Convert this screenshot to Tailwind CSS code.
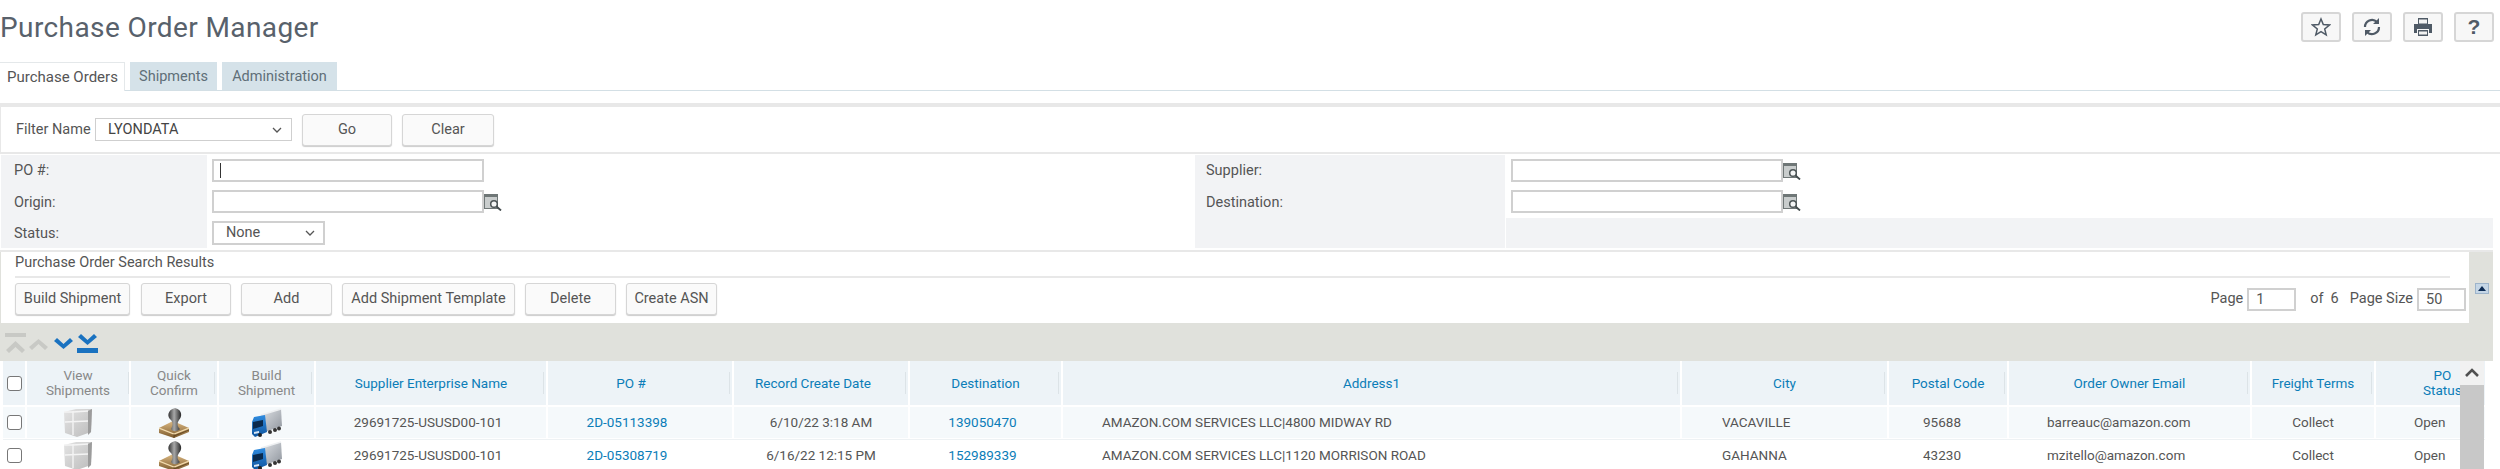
<!DOCTYPE html>
<html lang="en">
<head>
  <meta charset="UTF-8">
  <title>Purchase Order Manager</title>
  <script src="https://cdn.jsdelivr.net/npm/@tailwindcss/browser@4"></script>
</head>
<body class="w-[2500px] h-[469px] overflow-hidden bg-white font-['Roboto',sans-serif] text-[14.5px] text-[#555]">
  <svg class="absolute w-0 h-0">
    <defs>
      <linearGradient id="cubeG" x1="0" y1="0" x2="1" y2="1"><stop offset="0" stop-color="#e4e4e4"/><stop offset="1" stop-color="#bcbcbc"/></linearGradient>
      <linearGradient id="woodG" x1="0" y1="0" x2="0" y2="1"><stop offset="0" stop-color="#dcb983"/><stop offset="1" stop-color="#7c5a2c"/></linearGradient>
      <linearGradient id="knobG" x1="0" y1="0" x2="1" y2="0"><stop offset="0" stop-color="#333"/><stop offset="0.45" stop-color="#a8a8a8"/><stop offset="1" stop-color="#262626"/></linearGradient>
      <linearGradient id="trailerG" x1="0" y1="0" x2="1" y2="1"><stop offset="0" stop-color="#dfe2e6"/><stop offset="1" stop-color="#8f959d"/></linearGradient>
      <linearGradient id="cabG" x1="0" y1="0" x2="0" y2="1"><stop offset="0" stop-color="#2f8ce0"/><stop offset="1" stop-color="#0f559f"/></linearGradient>
    </defs>
    <symbol id="cube" viewBox="0 0 30 30">
      <path d="M1 4 L13 1 L29 1 L28 24 L14 29 L2 25 Z" fill="url(#cubeG)"/>
      <path d="M25 3 L29 1 L28 24 L25 27 Z" fill="#9c9c9c"/>
      <path d="M10 3 V27 M2 14 L25 13 M1 4 L10 4 L25 3" stroke="#f4f4f4" stroke-width="1.4" fill="none"/>
    </symbol>
    <symbol id="stamp" viewBox="0 0 30 30">
      <path d="M0 20 L14 13 L30 20 L30 24 L15 30 L0 25 Z" fill="url(#woodG)"/>
      <path d="M0 20 L15 26 L30 20" stroke="#f3dcae" stroke-width="1.2" fill="none"/>
      <path d="M15 26 V30 M15 28 L30 22" stroke="#5a3f1c" stroke-width="0.8" fill="none"/>
      <path d="M12 21 C14 17 14 15 12 12 C8 9 8 2 16 0 C24 2 23 9 20 12 C18 15 18 18 21 21 C18 24 14 24 12 21 Z" fill="url(#knobG)"/>
    </symbol>
    <symbol id="truck" viewBox="0 0 30 30">
      <path d="M9 7 L29 1 L30 18 L13 24 Z" fill="url(#trailerG)"/>
      <path d="M9 7 L29 1" stroke="#eef0f2" stroke-width="1.4"/>
      <path d="M0 14 L2 9 L13 7 L15 24 L3 29 L0 26 Z" fill="url(#cabG)"/>
      <path d="M1 14 L11 12 L11 18 L1 21 Z" fill="#0a2a4d"/>
      <path d="M2 24 L7 23 L7 25 L2 26 Z" fill="#d8e6f4"/>
      <circle cx="8" cy="27" r="2" fill="#222"/><circle cx="18" cy="24" r="2" fill="#333"/><circle cx="23" cy="22" r="2" fill="#333"/><circle cx="27" cy="20.5" r="2" fill="#333"/>
    </symbol>
    <symbol id="lookup" viewBox="0 0 18 17">
      <rect x="0.5" y="0.5" width="13" height="14" fill="#c9cdcd" stroke="#6f7777"/>
      <rect x="0" y="0" width="14" height="3" fill="#6f7777"/>
      <circle cx="10" cy="10" r="3.3" fill="#f4f5f5" stroke="#4d5557" stroke-width="1.5"/>
      <path d="M12.5 12.5 L17 16.5" stroke="#444c4e" stroke-width="1.8"/>
    </symbol>
    <symbol id="chev" viewBox="0 0 10 6"><path d="M1 1 L5 5 L9 1" fill="none" stroke="#555" stroke-width="1.3"/></symbol>
  </svg>

  <!-- title and page tools -->
  <header class="h-[62px] flex items-start justify-between">
    <h1 class="mt-[8px] text-[28px] leading-[40px] tracking-[0.4px] text-[#58616b]">Purchase Order Manager</h1>
    <div class="mt-[12px] mr-[6px] flex gap-[11px]">
      <button class="w-[40px] h-[30px] flex items-center justify-center border-2 border-[#d6d6d6] rounded-[3px] bg-[#f7f7f7]">
        <svg width="20" height="20" viewBox="0 0 20 20"><path d="M10 2 L12.3 7.6 L18.4 8 L13.7 11.9 L15.2 17.8 L10 14.6 L4.8 17.8 L6.3 11.9 L1.6 8 L7.7 7.6 Z" fill="none" stroke="#4f5a66" stroke-width="1.5"/></svg>
      </button>
      <button class="w-[40px] h-[30px] flex items-center justify-center border-2 border-[#d6d6d6] rounded-[3px] bg-[#f7f7f7]">
        <svg width="20" height="20" viewBox="0 0 20 20"><path d="M3 10 A7 7 0 0 1 15 5 M17 10 A7 7 0 0 1 5 15" fill="none" stroke="#4f5a66" stroke-width="2.2"/><path d="M17 1 V7 H11 Z M3 19 V13 H9 Z" fill="#4f5a66"/></svg>
      </button>
      <button class="w-[40px] h-[30px] flex items-center justify-center border-2 border-[#d6d6d6] rounded-[3px] bg-[#f7f7f7]">
        <svg width="20" height="20" viewBox="0 0 20 20"><path d="M5 1 H15 V7 H5 Z M1 7 H19 V16 H16 V12 H4 V16 H1 Z M5 13 H15 V19 H5 Z" fill="#4f5a66"/><path d="M6 2.5 H14 V6.5 H6 Z M6 14.5 H14 V17.5 H6 Z" fill="#f2f2f2"/></svg>
      </button>
      <button class="w-[40px] h-[30px] flex items-center justify-center border-2 border-[#d6d6d6] rounded-[3px] bg-[#f7f7f7] font-['Liberation_Sans',sans-serif] font-bold text-[21px] text-[#4f5a66]">?</button>
    </div>
  </header>

  <!-- tabs -->
  <nav class="h-[29px] flex items-stretch gap-[5px] border-b border-[#d3dfe5]">
    <span class="w-[125px] -mb-px pl-[7px] text-[15px] leading-[29px] bg-white border-t border-r border-[#e4e8ea]">Purchase Orders</span>
    <span class="w-[87px] text-center leading-[29px] bg-[#d5e2e9] text-[#5f6f78]">Shipments</span>
    <span class="w-[115px] text-center leading-[29px] bg-[#d5e2e9] text-[#5f6f78]">Administration</span>
  </nav>
  <div class="mt-[12px] h-[4px] bg-[#e8e8e8]"></div>

  <!-- saved filter -->
  <section class="h-[47px] pl-[15px] flex items-center border-b-2 border-[#e8e8e8] border-l border-l-[#e8e8e8]">
    <span class="w-[79px]">Filter Name</span>
    <div class="w-[197px] h-[23px] pl-[12px] pr-[9px] flex items-center justify-between border border-[#cfcfcf]">
      <span class="text-[#444]">LYONDATA</span>
      <svg width="10" height="6"><use href="#chev"/></svg>
    </div>
    <button class="ml-[10px] w-[90px] h-[32px] border border-[#d6d6d6] rounded-[3px] bg-[#fafafa] shadow-[0_1px_1px_#ccc] text-[#555]">Go</button>
    <button class="ml-[10px] w-[92px] h-[32px] border border-[#d6d6d6] rounded-[3px] bg-[#fafafa] shadow-[0_1px_1px_#ccc] text-[#555]">Clear</button>
  </section>

  <!-- search fields -->
  <section class="mt-px ml-px w-[2492px] h-[93px] grid grid-cols-[206px_988px_310px_1fr] grid-rows-[32px_31px_30px]">
    <div class="pl-[13px] pt-[5px] bg-[#f2f3f5]">PO #:</div>
    <div class="pl-[5px] pt-[4px]">
      <div class="relative w-[272px]">
        <input class="w-full h-[23px] block border-2 border-[#d0d0d0] bg-white">
        <span class="absolute left-[8px] top-[4px] w-px h-[15px] bg-[#333]"></span>
      </div>
    </div>
    <div class="pl-[11px] pt-[5px] bg-[#f2f3f5]">Supplier:</div>
    <div class="ml-[1px] pl-[5px] pt-[4px] flex items-start">
      <input class="w-[272px] h-[23px] border-2 border-[#d0d0d0] bg-white">
      <svg class="mt-[4px]" width="18" height="17"><use href="#lookup"/></svg>
    </div>

    <div class="pl-[13px] pt-[5px] bg-[#f2f3f5]">Origin:</div>
    <div class="pl-[5px] pt-[3px] flex items-start">
      <input class="w-[272px] h-[23px] border-2 border-[#d0d0d0] bg-white">
      <svg class="mt-[4px]" width="18" height="17"><use href="#lookup"/></svg>
    </div>
    <div class="pl-[11px] pt-[5px] bg-[#f2f3f5]">Destination:</div>
    <div class="ml-[1px] pl-[5px] pt-[3px] flex items-start">
      <input class="w-[272px] h-[23px] border-2 border-[#d0d0d0] bg-white">
      <svg class="mt-[4px]" width="18" height="17"><use href="#lookup"/></svg>
    </div>

    <div class="pl-[13px] pt-[5px] bg-[#f2f3f5]">Status:</div>
    <div class="pl-[5px] pt-[3px]">
      <div class="w-[113px] h-[24px] pl-[12px] pr-[8px] flex items-center justify-between border-2 border-[#d0d0d0]">
        <span>None</span>
        <svg width="10" height="6"><use href="#chev"/></svg>
      </div>
    </div>
    <div class="bg-[#f2f3f5]"></div>
    <div class="ml-[1px] bg-[#f2f3f5]"></div>
  </section>
  <div class="mt-[2px] mr-[7px] h-[2px] bg-[#e8e8e8]"></div>

  <!-- results panel, on the grey band -->
  <section class="mr-[7px] bg-[#e0e1dc]">
    <div class="flex items-start">
      <div class="w-[2468px] h-[71px] ml-px bg-white">
        <div class="ml-[14px] mr-[19px] h-[26px] pt-px leading-[20px] border-b-2 border-[#e8e8e8]">Purchase Order Search Results</div>
        <div class="mt-[5px] pl-[14px] flex items-center">
          <button class="w-[115px] h-[32px] border border-[#d6d6d6] rounded-[3px] bg-[#fafafa] shadow-[0_1px_1px_#ccc]">Build Shipment</button>
          <button class="ml-[11px] w-[90px] h-[32px] border border-[#d6d6d6] rounded-[3px] bg-[#fafafa] shadow-[0_1px_1px_#ccc]">Export</button>
          <button class="ml-[10px] w-[91px] h-[32px] border border-[#d6d6d6] rounded-[3px] bg-[#fafafa] shadow-[0_1px_1px_#ccc]">Add</button>
          <button class="ml-[10px] w-[173px] h-[32px] border border-[#d6d6d6] rounded-[3px] bg-[#fafafa] shadow-[0_1px_1px_#ccc]">Add Shipment Template</button>
          <button class="ml-[10px] w-[91px] h-[32px] border border-[#d6d6d6] rounded-[3px] bg-[#fafafa] shadow-[0_1px_1px_#ccc]">Delete</button>
          <button class="ml-[10px] w-[91px] h-[32px] border border-[#d6d6d6] rounded-[3px] bg-[#fafafa] shadow-[0_1px_1px_#ccc]">Create ASN</button>
          <div class="ml-auto mr-[3px] flex items-center">
            <span>Page</span>
            <input value="1" class="ml-[4px] w-[49px] h-[23px] pl-[7px] border-2 border-[#d0d0d0] text-[#555]">
            <span class="ml-[14px]">of</span>
            <span class="ml-[7px]">6</span>
            <span class="ml-[11px]">Page Size</span>
            <input value="50" class="ml-[4px] w-[49px] h-[23px] pl-[7px] border-2 border-[#d0d0d0] text-[#555]">
          </div>
        </div>
      </div>
      <div class="ml-[6px] mt-[31px] w-[14px] h-[11px] flex items-center justify-center bg-[#c5d6e6] border border-[#9db4cb]">
        <svg width="8" height="5"><path d="M4 0 L8 5 H0 Z" fill="#0d2c55"/></svg>
      </div>
    </div>
    <div class="h-[38px] pl-[5px] pt-[10px] flex gap-[2px]">
      <svg width="21" height="20" viewBox="0 0 21 20"><path d="M0 0 H21 V4 H0 Z M1 17 L10.5 8 L20 17 L17 20 L10.5 14 L4 20 Z" fill="#c8c9c5"/></svg>
      <svg width="21" height="20" viewBox="0 0 21 20"><path d="M1 14 L10.5 6 L20 14 L17 17 L10.5 11 L4 17 Z" fill="#c8c9c5"/></svg>
      <svg class="ml-[2px]" width="21" height="20" viewBox="0 0 21 20"><path d="M1 8 L4 5 L10.5 11 L17 5 L20 8 L10.5 16 Z" fill="#1a72c0"/></svg>
      <svg class="ml-[1px]" width="21" height="20" viewBox="0 0 21 20"><path d="M1 4 L4 1 L10.5 7 L17 1 L20 4 L10.5 12 Z M0 15 H21 V20 H0 Z" fill="#1a72c0"/></svg>
    </div>
  </section>

  <!-- results table -->
  <section class="relative w-[2485px] pl-[3px] text-[13.5px]">
    <div class="grid grid-cols-[22px_102px_86px_95px_230px_184px_174px_151px_617px_205px_118px_241px_122px_109px] grid-rows-[44px_2px_31px_2px_31px] gap-x-[2px]">
      <!-- header row -->
      <div class="bg-[#edf3f7] flex items-center pl-[4px]"><input type="checkbox" class="appearance-none w-[15px] h-[15px] border border-[#777] rounded-[3px] bg-white"></div>
      <div class="bg-[#edf3f7] relative flex items-center justify-center text-center leading-[15px] text-[#888]">View<br>Shipments<i class="absolute right-0 top-[11px] w-px h-[22px] bg-[#dce3e7]"></i></div>
      <div class="bg-[#edf3f7] relative flex items-center justify-center text-center leading-[15px] text-[#888]">Quick<br>Confirm<i class="absolute right-[2px] top-[11px] w-px h-[22px] bg-[#dce3e7]"></i></div>
      <div class="bg-[#edf3f7] relative flex items-center justify-center text-center leading-[15px] text-[#888]">Build<br>Shipment<i class="absolute right-[2px] top-[11px] w-px h-[22px] bg-[#dce3e7]"></i></div>
      <div class="bg-[#edf3f7] relative flex items-center justify-center text-[#0b7db8]">Supplier Enterprise Name<i class="absolute right-[2px] top-[11px] w-px h-[22px] bg-[#dce3e7]"></i></div>
      <div class="bg-[#edf3f7] relative flex items-center justify-center pr-[18px] text-[#0b7db8]">PO #<i class="absolute right-[2px] top-[11px] w-px h-[22px] bg-[#dce3e7]"></i></div>
      <div class="bg-[#edf3f7] relative flex items-center justify-center pr-[16px] text-[#0b7db8]">Record Create Date<i class="absolute right-[2px] top-[11px] w-px h-[22px] bg-[#dce3e7]"></i></div>
      <div class="bg-[#edf3f7] relative flex items-center justify-center text-[#0b7db8]">Destination<i class="absolute right-[2px] top-[11px] w-px h-[22px] bg-[#dce3e7]"></i></div>
      <div class="bg-[#edf3f7] relative flex items-center justify-center text-[#0b7db8]">Address1<i class="absolute right-[2px] top-[11px] w-px h-[22px] bg-[#dce3e7]"></i></div>
      <div class="bg-[#edf3f7] relative flex items-center justify-center text-[#0b7db8]">City<i class="absolute right-[2px] top-[11px] w-px h-[22px] bg-[#dce3e7]"></i></div>
      <div class="bg-[#edf3f7] relative flex items-center justify-center text-[#0b7db8]">Postal Code<i class="absolute right-[2px] top-[11px] w-px h-[22px] bg-[#dce3e7]"></i></div>
      <div class="bg-[#edf3f7] relative flex items-center justify-center text-[#0b7db8]">Order Owner Email<i class="absolute right-[2px] top-[11px] w-px h-[22px] bg-[#dce3e7]"></i></div>
      <div class="bg-[#edf3f7] relative flex items-center justify-center text-[#0b7db8]">Freight Terms<i class="absolute right-[2px] top-[11px] w-px h-[22px] bg-[#dce3e7]"></i></div>
      <div class="bg-[#edf3f7] flex items-center pl-[47px] text-center leading-[15px] text-[#0b7db8]"><span>PO<br>Status</span></div>

      <div class="col-span-14"></div>

      <!-- row 1 -->
      <div class="bg-[#f5f9fb] flex items-center pl-[4px]"><input type="checkbox" class="appearance-none w-[15px] h-[15px] border border-[#777] rounded-[3px] bg-white"></div>
      <div class="bg-[#f5f9fb] flex items-center justify-center"><svg width="30" height="30"><use href="#cube"/></svg></div>
      <div class="bg-[#f5f9fb] flex items-center justify-center"><svg width="30" height="30"><use href="#stamp"/></svg></div>
      <div class="bg-[#f5f9fb] flex items-center justify-center"><svg width="30" height="30"><use href="#truck"/></svg></div>
      <div class="bg-[#f5f9fb] flex items-center justify-center pr-[6px]">29691725-USUSD00-101</div>
      <div class="bg-[#f5f9fb] flex items-center justify-center pr-[26px] text-[#0b7db8]">2D-05113398</div>
      <div class="bg-[#f5f9fb] flex items-center justify-center">6/10/22 3:18 AM</div>
      <div class="bg-[#f5f9fb] flex items-center justify-center pr-[6px] text-[#0b7db8]">139050470</div>
      <div class="bg-[#f5f9fb] flex items-center pl-[39px]">AMAZON.COM SERVICES LLC|4800 MIDWAY RD</div>
      <div class="bg-[#f5f9fb] flex items-center pl-[40px]">VACAVILLE</div>
      <div class="bg-[#f5f9fb] flex items-center justify-center pr-[12px]">95688</div>
      <div class="bg-[#f5f9fb] flex items-center pl-[38px]">barreauc@amazon.com</div>
      <div class="bg-[#f5f9fb] flex items-center justify-center">Collect</div>
      <div class="bg-[#f5f9fb] flex items-center pl-[38px]">Open</div>

      <div class="col-span-14 border-b border-[#eef2f4]"></div>

      <!-- row 2 -->
      <div class="flex items-center pl-[4px]"><input type="checkbox" class="appearance-none w-[15px] h-[15px] border border-[#777] rounded-[3px] bg-white"></div>
      <div class="flex items-center justify-center"><svg width="30" height="30"><use href="#cube"/></svg></div>
      <div class="flex items-center justify-center"><svg width="30" height="30"><use href="#stamp"/></svg></div>
      <div class="flex items-center justify-center"><svg width="30" height="30"><use href="#truck"/></svg></div>
      <div class="flex items-center justify-center pr-[6px]">29691725-USUSD00-101</div>
      <div class="flex items-center justify-center pr-[26px] text-[#0b7db8]">2D-05308719</div>
      <div class="flex items-center justify-center">6/16/22 12:15 PM</div>
      <div class="flex items-center justify-center pr-[6px] text-[#0b7db8]">152989339</div>
      <div class="flex items-center pl-[39px]">AMAZON.COM SERVICES LLC|1120 MORRISON ROAD</div>
      <div class="flex items-center pl-[40px]">GAHANNA</div>
      <div class="flex items-center justify-center pr-[12px]">43230</div>
      <div class="flex items-center pl-[38px]">mzitello@amazon.com</div>
      <div class="flex items-center justify-center">Collect</div>
      <div class="flex items-center pl-[38px]">Open</div>
    </div>

    <!-- scrollbar over the last column -->
    <div class="absolute right-px top-0 bottom-0 w-[24px] flex flex-col">
      <div class="h-[24px] flex items-center justify-center bg-[#f1f1f1]">
        <svg width="14" height="10" viewBox="0 0 14 10"><path d="M1 8 L7 2 L13 8" fill="none" stroke="#505050" stroke-width="2.6"/></svg>
      </div>
      <div class="flex-1 bg-[#c8c8c8]"></div>
    </div>
  </section>
</body>
</html>
